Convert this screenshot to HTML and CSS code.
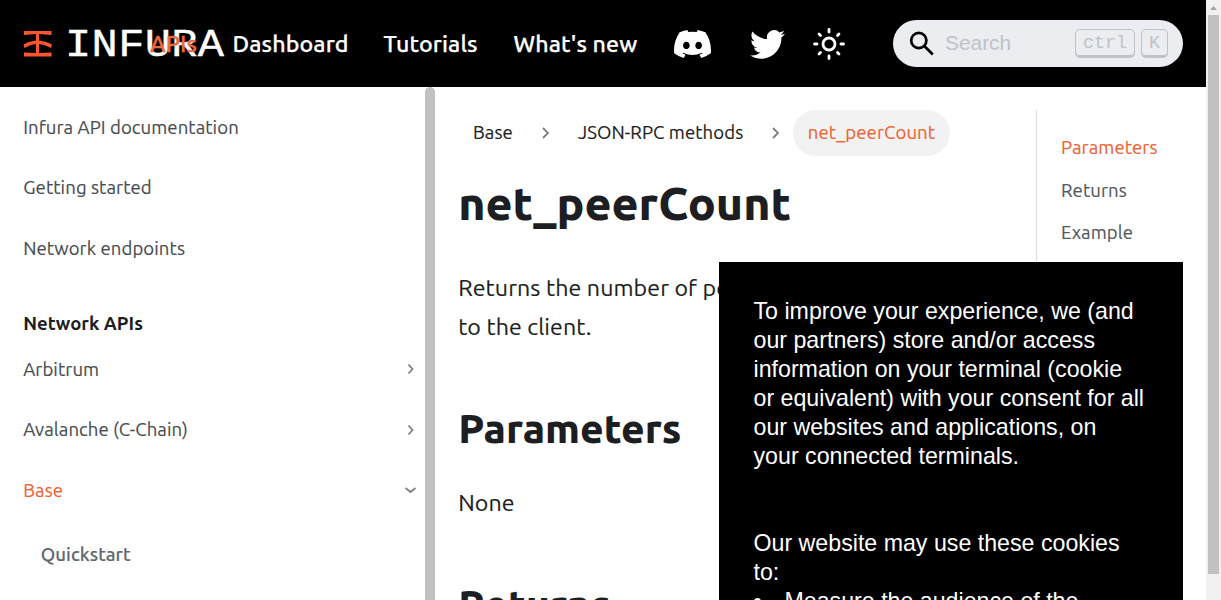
FILE: index.html
```html
<!DOCTYPE html>
<html lang="en">
<head>
<meta charset="utf-8">
<title>net_peerCount | INFURA</title>
<link rel="stylesheet" href="styles.css">
</head>
<body>
<div class="window">
  <div class="page">
    <header class="navbar">
      <a class="brand">
        <svg class="brand-mark" width="29" height="26" viewBox="0 0 29 26" fill="#ff5630">
          <path d="M1 0H28.500V4L16 3V9.500Q24 10.500 29 13.500L28 17Q22 13.500 16 13V22L28.500 21.500V25.500H1V21.500L13 22V13Q7 13.500 1.500 17L.5 13.500Q5 10.500 13 9.500V3L1 4Z"/>
        </svg>
        <span class="brand-name">INFURA</span>
        <span class="nav-apis">APIs</span>
      </a>
      <nav class="nav-links">
        <a class="nav-dashboard">Dashboard</a>
        <a class="nav-tutorials">Tutorials</a>
        <a class="nav-news">What's new</a>
      </nav>
      <div class="nav-icons">
        <svg width="37" height="28" viewBox="0 0 127.140 96.360" fill="#fff"><path d="M107.700 8.070A105.150 105.150 0 0 0 81.470 0a72.060 72.060 0 0 0-3.360 6.830 97.680 97.680 0 0 0-29.110 0A72.370 72.370 0 0 0 45.640 0a105.890 105.890 0 0 0-26.250 8.090C2.790 32.650-1.710 56.600.54 80.210a105.730 105.730 0 0 0 32.170 16.150 77.700 77.700 0 0 0 6.890-11.110 68.420 68.420 0 0 1-10.850-5.180c.91-.66 1.800-1.340 2.660-2a75.570 75.570 0 0 0 64.320 0c.87.71 1.760 1.390 2.660 2a68.680 68.680 0 0 1-10.870 5.190 77 77 0 0 0 6.890 11.100 105.250 105.250 0 0 0 32.190-16.140c2.640-27.380-4.510-51.110-18.900-72.150ZM42.450 65.690C36.180 65.690 31 60 31 53s5-12.740 11.430-12.740S54 46 53.890 53s-5.050 12.690-11.440 12.690Zm42.240 0C78.410 65.690 73.250 60 73.250 53s5-12.740 11.440-12.740S96.230 46 96.120 53s-5.040 12.690-11.430 12.690Z"/></svg>
        <svg class="icon-twitter" width="35" height="35" viewBox="0 0 24 24" fill="#fff"><path d="M23.953 4.570a10 10 0 0 1-2.825.775 4.958 4.958 0 0 0 2.163-2.723c-.951.555-2.005.959-3.127 1.184a4.920 4.920 0 0 0-8.384 4.482C7.690 8.095 4.067 6.130 1.640 3.162a4.822 4.822 0 0 0-.666 2.475c0 1.710.870 3.213 2.188 4.096a4.904 4.904 0 0 1-2.228-.616v.060a4.923 4.923 0 0 0 3.946 4.827 4.996 4.996 0 0 1-2.212.085 4.936 4.936 0 0 0 4.604 3.417 9.867 9.867 0 0 1-6.102 2.105c-.390 0-.779-.023-1.170-.067a13.995 13.995 0 0 0 7.557 2.209c9.053 0 13.998-7.496 13.998-13.985 0-.210 0-.420-.015-.630A9.935 9.935 0 0 0 24 4.590z"/></svg>
        <svg class="icon-sun" width="34" height="34" viewBox="0 0 34 34" fill="none" stroke="#fff" stroke-width="2.800" stroke-linecap="round"><circle cx="17" cy="17" r="6"/><path d="M17 2.500V5M17 29v2.500M2.500 17H5M29 17h2.500M7 7l1.500 1.500M25.500 25.500 27 27M27 7l-1.500 1.500M8.500 25.500 7 27"/></svg>
      </div>
      <div class="search">
        <svg width="25" height="25" viewBox="0 0 25 25" fill="none" stroke="#000" stroke-width="2.700"><circle cx="9.800" cy="9.500" r="7.600"/><path d="m15.300 15 8.500 8.500"/></svg>
        <span class="search-label">Search</span>
        <kbd class="key-ctrl">ctrl</kbd><kbd class="key-k">K</kbd>
      </div>
    </header>
    <div class="columns">
      <aside class="sidebar">
        <a class="item"><span>Infura API documentation</span></a>
        <a class="item"><span>Getting started</span></a>
        <a class="item"><span>Network endpoints</span></a>
        <div class="item group"><span>Network APIs</span></div>
        <a class="item"><span>Arbitrum</span><svg width="10" height="12" viewBox="0 0 10 12"><path d="m2.500 1.500 4 4.500-4 4.500"/></svg></a>
        <a class="item"><span>Avalanche (C-Chain)</span><svg width="10" height="12" viewBox="0 0 10 12"><path d="m2.500 1.500 4 4.500-4 4.500"/></svg></a>
        <a class="item active"><span>Base</span><svg width="12" height="10" viewBox="0 0 12 10"><path d="m1.500 3 5 4 5-4"/></svg></a>
        <a class="item sub"><span>Quickstart</span></a>
      </aside>
      <div class="sidebar-scroll"></div>
      <main class="content">
        <nav class="crumbs">
          <a class="c1">Base</a>
          <svg width="10" height="14" viewBox="0 0 10 14"><path d="m2 2 5 5-5 5"/></svg>
          <a class="c2">JSON-RPC methods</a>
          <svg width="10" height="14" viewBox="0 0 10 14"><path d="m2 2 5 5-5 5"/></svg>
          <a class="c3">net_peerCount</a>
        </nav>
        <h1>net_peerCount</h1>
        <p class="lead">Returns the number of peers currently connected<br>to the client.</p>
        <h2 class="h-params">Parameters</h2>
        <p class="none">None</p>
        <h2 class="h-returns">Returns</h2>
      </main>
      <nav class="toc">
        <a class="active">Parameters</a>
        <a>Returns</a>
        <a>Example</a>
      </nav>
    </div>
  </div>
  <div class="scrollbar">
    <svg width="15" height="15" viewBox="0 0 15 15"><path d="M4 10h7L7.500 6z" fill="#a3a3a3"/></svg>
    <div class="thumb"></div>
  </div>
  <section class="cookies">
    <p>To improve your experience, we (and our partners) store and/or access information on your terminal (cookie or equivalent) with your consent for all our websites and applications, on your connected terminals.</p>
    <p class="uses">Our website may use these cookies to:</p>
    <ul><li><i class="bullet"></i>Measure the audience of the</li></ul>
  </section>
</div>
</body>
</html>
```
FILE: styles.css
```css
* { box-sizing: border-box; }
body { margin: 0; overflow: hidden; background: #fff; color: #1c1e21; font-family: Ubuntu, "Noto Sans", sans-serif; font-weight: 400; -webkit-text-stroke: .15px; }
h1, h2, p, ul { margin: 0; }
.window { position: relative; display: flex; width: 1221px; height: 600px; overflow: hidden; }
.page { width: 1206px; }

.navbar { display: flex; align-items: center; height: 87px; padding: 0 23px; background: #000; color: #fff; }
.brand { position: relative; display: flex; align-items: center; width: 209.500px; height: 87px; }
.brand-mark { flex: none; }
.brand-name { width: 134px; margin-left: 13px; padding-top: 3px; font: 38px/87px "Liberation Mono", monospace; letter-spacing: .3px; -webkit-text-stroke: .4px; transform: scaleX(1.150); transform-origin: 0 50%; }
.nav-apis { position: absolute; left: 127px; top: 28px; color: #ef6a3f; font-size: 23.200px; font-weight: 500; line-height: 31px; letter-spacing: .1px; -webkit-text-stroke: .35px; }
.nav-links { display: flex; width: 441px; padding-bottom: 1px; font-size: 23.200px; font-weight: 500; white-space: nowrap; line-height: 31px; letter-spacing: .12px; -webkit-text-stroke: .25px; }
.nav-dashboard { width: 151px; }
.nav-tutorials { width: 130px; }
.nav-icons { display: flex; align-items: center; width: 219.500px; }
.nav-icons svg { flex: none; }
.icon-twitter { margin: 1px 0 0 39px; }
.icon-sun { margin-left: 27px; }
.search { display: flex; align-items: center; width: 290px; height: 47px; padding: 0 15px 0 16px; border-radius: 24px; background: #ebedf0; color: #bdc3c9; -webkit-text-stroke: 0; }
.search-label { flex: 1; margin-left: 11px; padding-bottom: 2px; font: 20.880px/28px "Liberation Sans", sans-serif; }
kbd { height: 29px; border: 1px solid #bdc3c9; border-bottom-width: 2px; border-radius: 5px; box-shadow: inset 0 -1px 0 #bdc3c9; font: 18.400px/27px "Liberation Mono", monospace; text-align: center; }
.key-ctrl { width: 60px; }
.key-k { width: 27px; margin-left: 6px; }

.columns { display: flex; height: 513px; }
.sidebar { width: 425px; padding: 10.200px 9px 0 23.200px; overflow: hidden; color: #484c52; font-size: 18.560px; letter-spacing: .08px; }
.item { display: flex; align-items: center; justify-content: space-between; height: 60.500px; }
.item svg, .crumbs svg { fill: none; stroke: #7f7f7f; stroke-width: 1.800; }
.group { padding-top: 29px; color: #1c1e21; font-weight: 600; letter-spacing: 0; -webkit-text-stroke: 0; }
.sub { padding: 7px 0 0 17.500px; color: #606770; font-weight: 500; }
.active { color: #ec6337; }
.sidebar-scroll { width: 10px; border-radius: 5px 5px 0 0; background: #c1c1c1; }
.content { width: 601px; padding: 23px 0 0 23.200px; }
.crumbs { display: flex; align-items: center; height: 46px; padding-left: 14.800px; font-size: 18.560px; letter-spacing: .08px; white-space: nowrap; }
.crumbs a { line-height: 45px; height: 46px; }
.c1 { width: 68px; }
.c2 { width: 193px; margin-left: 27px; }
.crumbs svg { flex: none; }
.crumbs .c3 { width: 157px; margin-left: 12px; border-radius: 23px; background: #f2f2f2; color: #ec6337; text-align: center; }
h1, h2 { font-weight: 800; -webkit-text-stroke: 0; }
h1 { margin-top: 18px; font-size: 46.400px; line-height: 58px; }
h2 { font-size: 40.600px; line-height: 50px; }
.content p { font-size: 23.200px; line-height: 39px; letter-spacing: .1px; }
.content .lead { margin-top: 36px; white-space: nowrap; }
.h-params { margin-top: 57px; }
.content .none { margin-top: 30px; }
.h-returns { margin-top: 57px; }
.toc { display: flex; flex-direction: column; width: 147px; height: 400px; margin-top: 23px; padding: 17px 0 0 24px; border-left: 1px solid #dadde1; color: #525860; font-size: 18.560px; line-height: 42.500px; letter-spacing: .08px; }
.toc .active { color: #ec6337; }

.scrollbar { width: 15px; background: #f1f1f1; }
.scrollbar svg { display: block; }
.thumb { width: 11px; height: 559px; margin-left: 2px; background: #c1c1c1; }

.cookies { position: absolute; left: 719px; top: 262px; width: 464px; height: 400px; padding: 35px 37px 35px 34.500px; background: #000; color: #fff; font: 23.200px/29px "Liberation Sans", sans-serif; -webkit-text-stroke: 0; }
.cookies .uses { margin-top: 58px; }
.cookies ul { padding: 0; list-style: none; }
.cookies li { display: flex; align-items: center; }
.bullet { width: 7px; height: 7px; margin-right: 24px; border-radius: 50%; background: #fff; }
```
